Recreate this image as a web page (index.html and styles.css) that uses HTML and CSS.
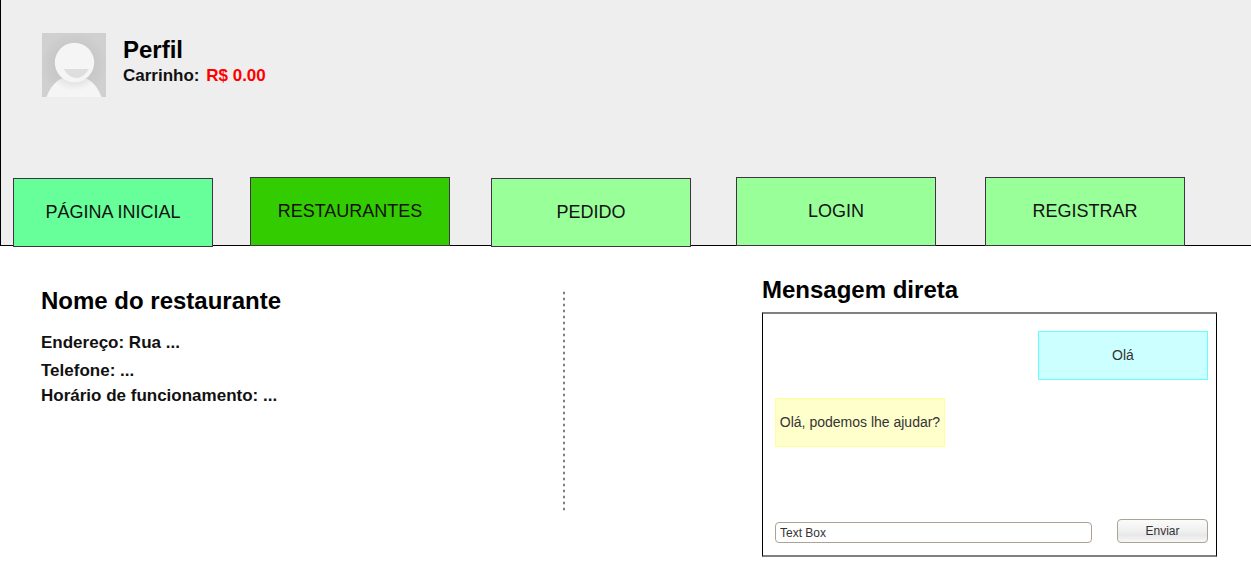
FILE: index.html
```html
<!DOCTYPE html>
<html lang="pt-BR">
<head>
<meta charset="utf-8">
<title>Restaurante</title>
<link rel="stylesheet" href="styles.css">
</head>
<body>
<header class="header">
  <div class="profile">
    <svg class="avatar" viewBox="0 0 64 64" aria-hidden="true">
      <defs>
        <radialGradient id="backdrop" cx="0.5" cy="0.5" r="0.65">
          <stop offset="0.5" stop-color="#c8c8c8"/>
          <stop offset="0.8" stop-color="#d0d0d0"/>
        </radialGradient>
        <radialGradient id="shade" gradientUnits="userSpaceOnUse" cx="32" cy="30" r="28">
          <stop offset="0.65" stop-color="#e2e2e2"/>
          <stop offset="1" stop-color="#f5f5f5"/>
        </radialGradient>
      </defs>
      <rect width="64" height="64" fill="url(#backdrop)"/>
      <path d="M4.500 64C10 50 18 43 32 43S54 50 59.500 64Z" fill="url(#shade)"/>
      <circle cx="32.500" cy="29.500" r="19.700" fill="#f5f5f5"/>
      <path d="M21.500 36H47C43 42 39 45 34.500 45S25.500 42 21.500 36Z" fill="#dedede"/>
    </svg>
    <div>
      <h1 class="title">Perfil</h1>
      <p class="cart">Carrinho: <span class="amount">R$ 0.00</span></p>
    </div>
  </div>
  <nav class="nav">
    <a class="tab tab-home tab-low" href="#">PÁGINA INICIAL</a>
    <a class="tab tab-current" href="#" aria-current="page">RESTAURANTES</a>
    <a class="tab tab-order tab-low" href="#">PEDIDO</a>
    <a class="tab tab-login" href="#">LOGIN</a>
    <a class="tab tab-register" href="#">REGISTRAR</a>
  </nav>
</header>
<main class="main">
  <section class="info">
    <h2 class="title">Nome do restaurante</h2>
    <p class="detail">Endereço: Rua ...</p>
    <p class="detail">Telefone: ...</p>
    <p class="detail detail-hours">Horário de funcionamento: ...</p>
  </section>
  <div class="divider"></div>
  <section class="messages">
    <h2 class="title">Mensagem direta</h2>
    <div class="chat">
      <p class="bubble bubble-sent">Olá</p>
      <p class="bubble bubble-received">Olá, podemos lhe ajudar?</p>
      <form class="composer">
        <input class="field" type="text" value="Text Box" aria-label="Mensagem">
        <button class="send" type="button">Enviar</button>
      </form>
    </div>
  </section>
</main>
</body>
</html>
```
FILE: styles.css
```css
* {
  box-sizing: border-box;
}

body,
h1,
h2,
p {
  margin: 0;
}

body {
  background: #fff;
  color: #000;
  font-family: "Liberation Sans", Arial, sans-serif;
}

.header {
  padding-top: 33px;
  border-left: 1px solid #000;
  border-bottom: 1px solid #000;
  background: #eee;
}

.profile {
  display: flex;
  gap: 17px;
  padding-left: 41px;
}

.avatar {
  width: 64px;
  height: 64px;
}

.title {
  font-size: 24px;
  line-height: 28px;
  font-weight: bold;
}

.profile .title {
  margin-top: 3px;
}

.cart {
  margin-top: 2px;
  font-size: 17px;
  line-height: 20px;
  font-weight: bold;
  color: #111;
}

.amount {
  margin-left: 2px;
  color: #f00;
}

.nav {
  display: grid;
  grid-template-columns: 200fr 37fr 200fr 41fr 200fr 45fr 200fr 49fr 200fr;
  margin-top: 80px;
  margin-bottom: -2px;
  padding: 0 66px 0 12px;
}

.tab {
  display: flex;
  align-items: center;
  justify-content: center;
  height: 69px;
  padding-bottom: 2px;
  border: 1px solid #3f3344;
  background: #9f9;
  color: #111;
  font-size: 18px;
  line-height: 20px;
  text-decoration: none;
}

.tab-low {
  margin-top: 1px;
}

.tab-home {
  background: #6f9;
}

.tab-current {
  grid-column: 3;
  background: #3c0;
}

.tab-order {
  grid-column: 5;
}

.tab-login {
  grid-column: 7;
}

.tab-register {
  grid-column: 9;
}

.main {
  display: grid;
  grid-template-columns: 563fr 2px 197fr 455fr 34fr;
  align-items: start;
  padding-top: 30px;
}

.info {
  padding: 11px 20px 0 41px;
}

.detail {
  margin-top: 8px;
  color: #111;
  font-size: 17px;
  line-height: 20px;
  font-weight: bold;
}

.title + .detail {
  margin-top: 18px;
}

.detail-hours {
  margin-top: 5px;
}

.divider {
  height: 220px;
  margin-top: 15px;
  background: repeating-linear-gradient(#ddd 0 1px, #808080 1px 3px, #ddd 3px 4px, #fff 4px 6px);
}

.messages {
  grid-column: 4;
}

.chat {
  display: flex;
  flex-direction: column;
  margin-top: 8px;
  padding: 17px 8px 12px 12px;
  border: solid #000;
  border-width: 2px 1px;
  border-top-color: #808080;
  border-bottom-color: #808080;
}

.bubble {
  width: 170px;
  padding: 15px 0 16px;
  border: 1px solid;
  color: #333;
  font-size: 14px;
  line-height: 16px;
  text-align: center;
}

.bubble-sent {
  align-self: flex-end;
  border-color: #6ff;
  background: #cff;
}

.bubble-received {
  margin-top: 18px;
  border-color: #ff9;
  background: #ffc;
}

.composer {
  display: flex;
  align-items: flex-end;
  gap: 25px;
  margin-top: 72px;
}

.field,
.send {
  border: 1px solid #aba393;
  border-radius: 4px;
  color: #333;
  font-family: inherit;
  font-size: 12px;
}

.field {
  flex: 1;
  min-width: 0;
  height: 21px;
  padding: 0 4px;
  background: #fff;
}

.send {
  width: 91px;
  height: 24px;
  padding: 0;
  background: linear-gradient(#fbfbfb, #f0f0f0 50%, #e8e8e8 70%, #f8f8f8);
}
```
